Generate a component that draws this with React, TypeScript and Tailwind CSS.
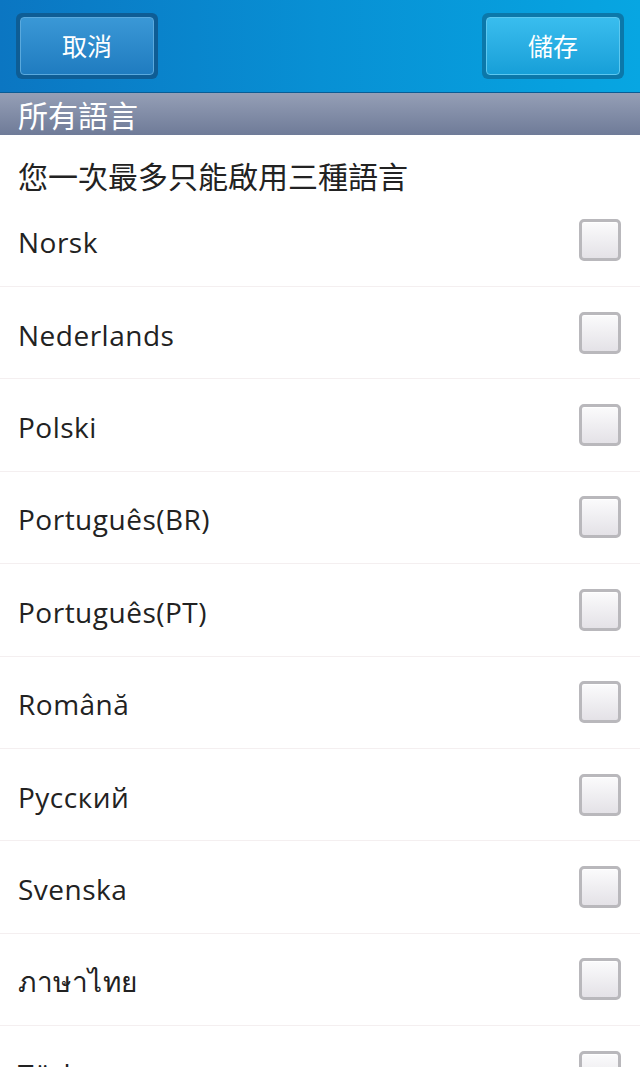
import React from "react";

const langs = [
  "Norsk",
  "Nederlands",
  "Polski",
  "Português(BR)",
  "Português(PT)",
  "Română",
  "Русский",
  "Svenska",
  "ภาษาไทย",
  "Türkçe",
];

const cjk = { fontFamily: '"Noto Sans CJK TC", "Noto Sans", sans-serif' };
const latin = { fontFamily: '"Open Sans", "Noto Sans", "Noto Sans CJK TC", sans-serif' };

function Checkbox() {
  return (
    <div className="w-[42px] h-[42px] shrink-0 rounded-[5px] border-[3px] border-[#b9b8bc] bg-gradient-to-b from-[#fbfbfc] to-[#e4e2e7] shadow-[inset_0_1px_0_#ffffff]" />
  );
}

export default function App() {
  return (
    <div className="w-[640px] h-[1067px] overflow-hidden bg-white">
      <div className="h-[93px] flex items-start justify-between px-4 pt-[13px] bg-gradient-to-r from-[#0b76c2] via-[#0890d4] to-[#07a6e2] border-b border-[#0a5c94]">
        <div className="w-[142px] h-[66px] rounded-[6px] bg-[#0e5d95] p-[4px]">
          <div
            className="w-full h-full rounded-[4px] bg-gradient-to-b from-[#3a98d6] to-[#1f7cc0] border border-[#5aa9dd] flex items-center justify-center text-white text-[25px]"
            style={cjk}
          >
            取消
          </div>
        </div>
        <div className="w-[142px] h-[66px] rounded-[6px] bg-[#0b78aa] p-[4px]">
          <div
            className="w-full h-full rounded-[4px] bg-gradient-to-b from-[#39bdee] to-[#169fd8] border border-[#5cc8f0] flex items-center justify-center text-white text-[25px]"
            style={cjk}
          >
            儲存
          </div>
        </div>
      </div>
      <div
        className="h-[42px] flex items-center px-[18px] bg-gradient-to-b from-[#959fb6] to-[#6f7b98] text-white text-[30px] leading-none"
        style={cjk}
      >
        所有語言
      </div>
      <div className="h-[59.6px] flex items-end pb-[2px] px-[18px] text-[#222] text-[30px] leading-none" style={cjk}>
        <span className="pb-[3px]">您一次最多只能啟用三種語言</span>
      </div>
      {langs.map((l) => (
        <div
          key={l}
          className="h-[92.4px] flex items-center justify-between pl-[18px] pr-[19px] border-b border-[#f4eff0] box-border"
        >
          <span className="text-[28px] tracking-[0.5px] text-[#222] pt-[4px]" style={latin}>
            {l}
          </span>
          <Checkbox />
        </div>
      ))}
    </div>
  );
}
